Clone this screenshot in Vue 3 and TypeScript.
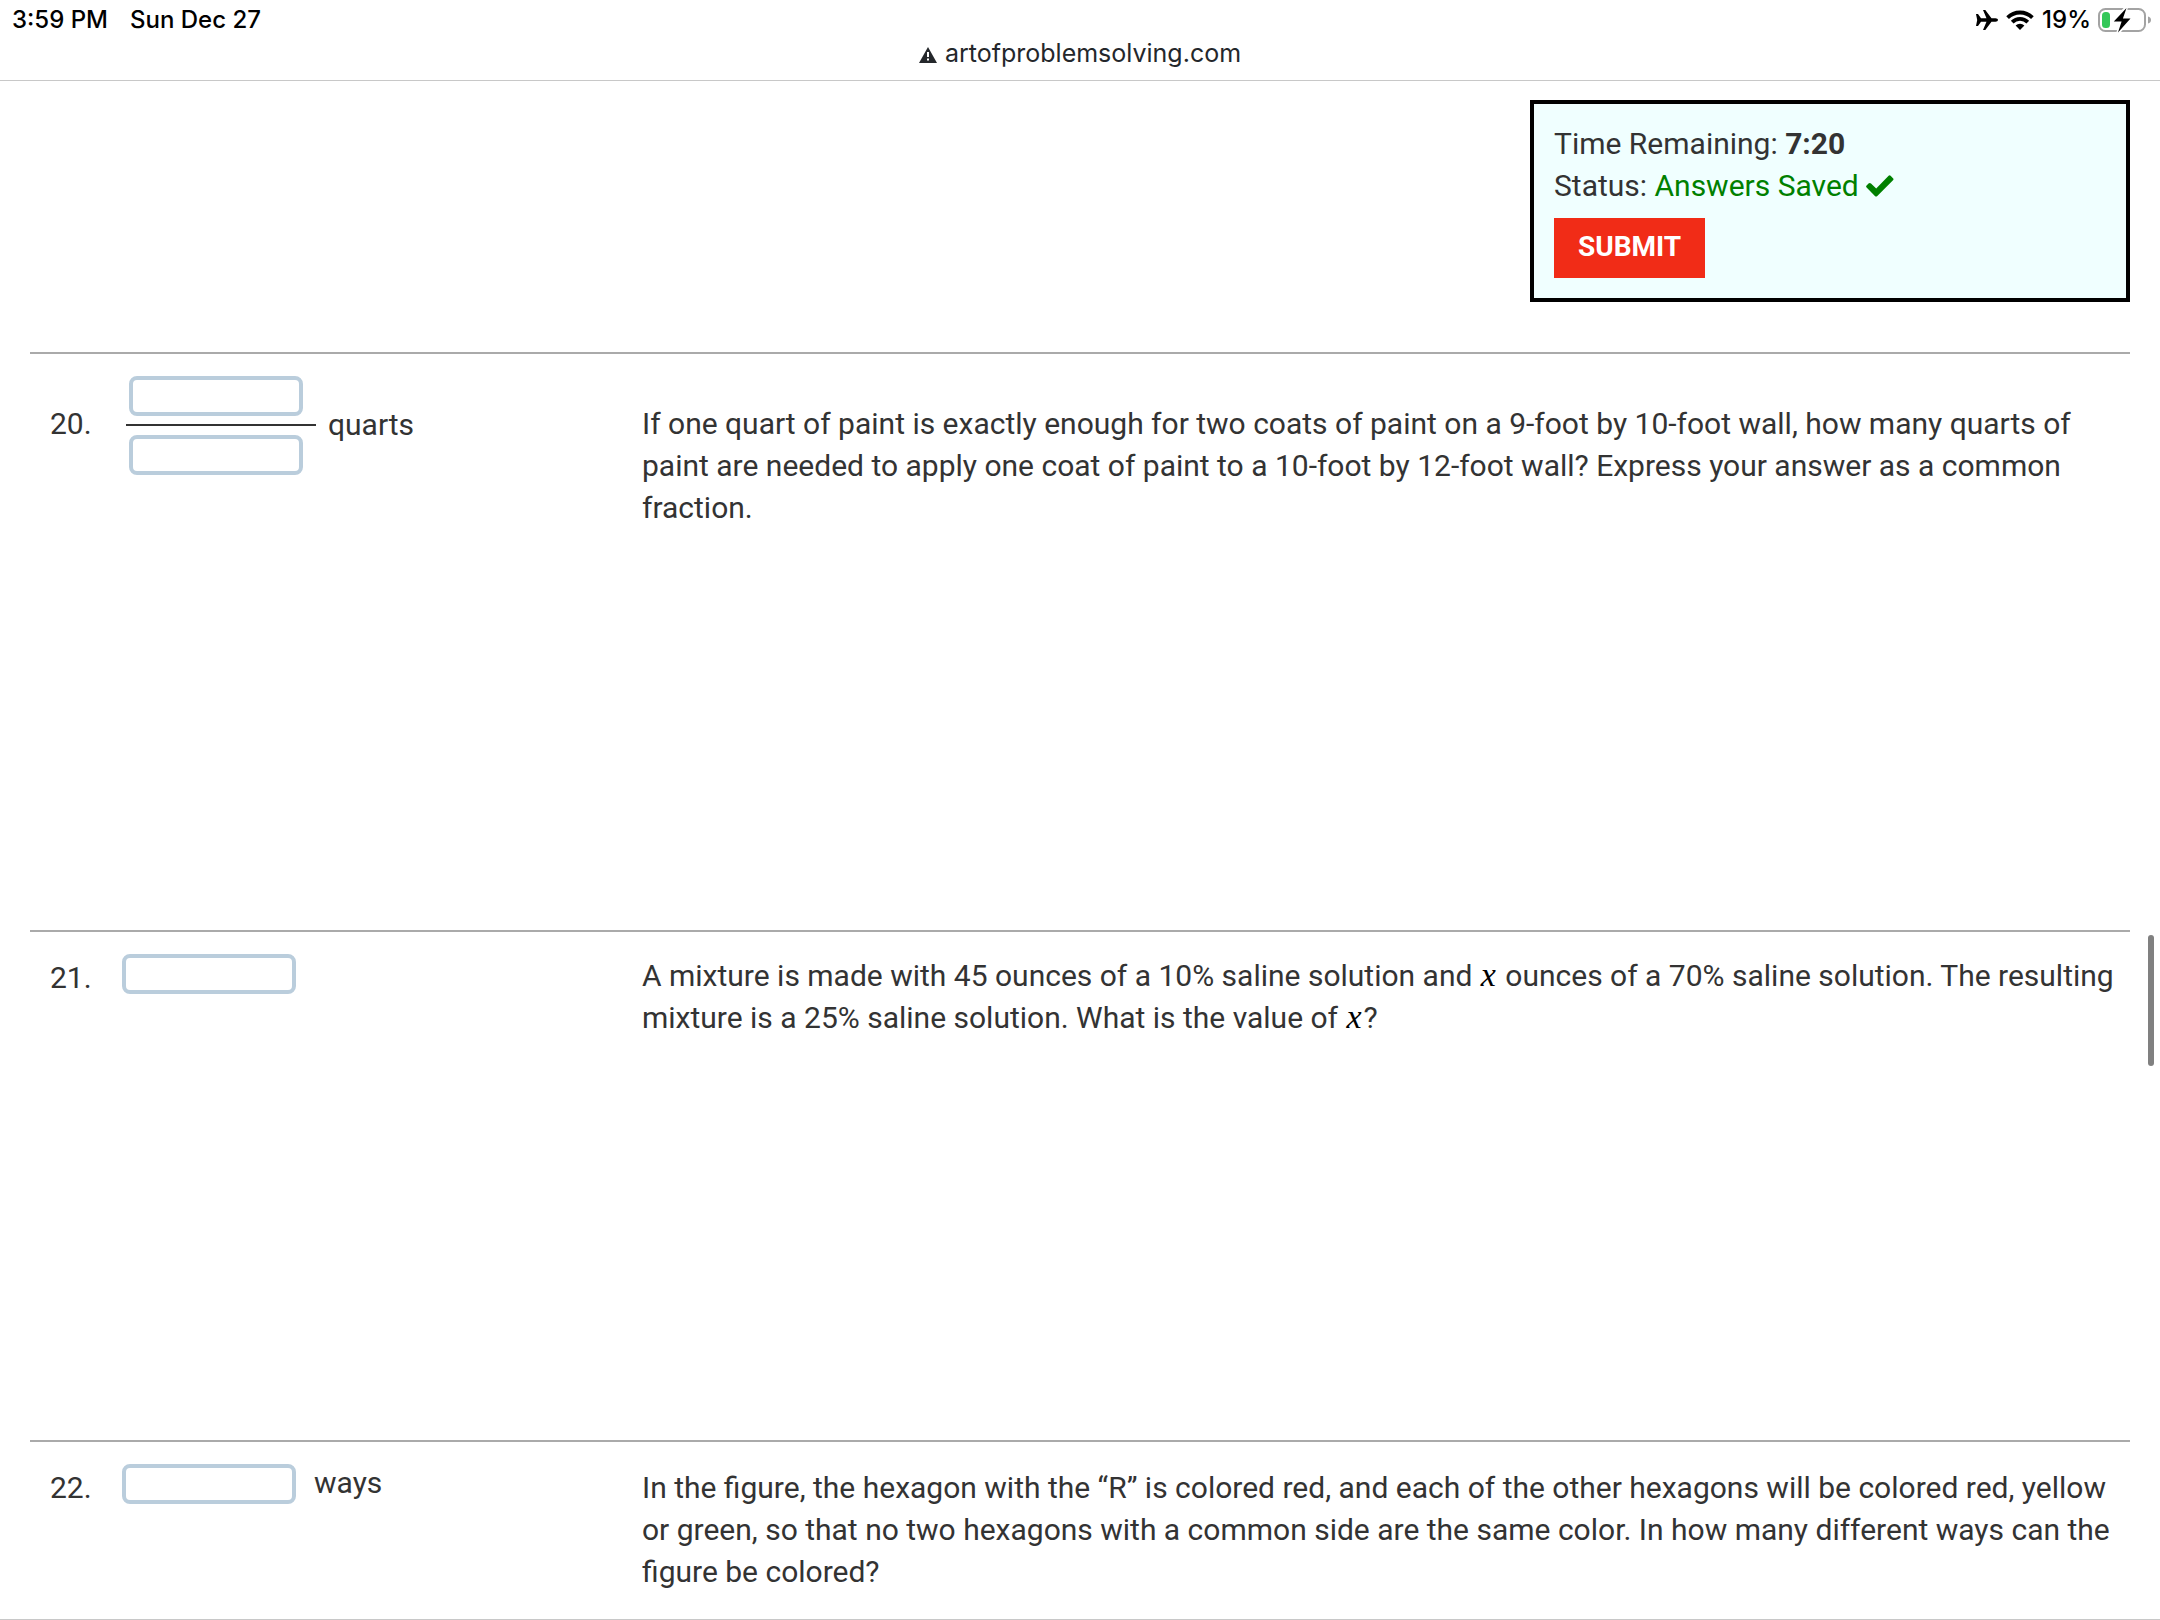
<script setup lang="ts">
import { ref } from 'vue'

interface Problem {
  number: number
  kind: 'single' | 'fraction'
  unit: string
  // pieces of text; entries marked as math are set in the math face
  text: { value: string; math?: boolean }[]
  size: 'tall' | 'medium' | 'rest'
}

const problems: Problem[] = [
  {
    number: 20,
    kind: 'fraction',
    unit: 'quarts',
    size: 'tall',
    text: [
      {
        value:
          'If one quart of paint is exactly enough for two coats of paint on a 9-foot by 10-foot wall, how many quarts of paint are needed to apply one coat of paint to a 10-foot by 12-foot wall? Express your answer as a common fraction.',
      },
    ],
  },
  {
    number: 21,
    kind: 'single',
    unit: '',
    size: 'medium',
    text: [
      { value: 'A mixture is made with 45 ounces of a 10% saline solution and ' },
      { value: 'x', math: true },
      {
        value:
          ' ounces of a 70% saline solution. The resulting mixture is a 25% saline solution. What is the value of ',
      },
      { value: 'x', math: true },
      { value: '?' },
    ],
  },
  {
    number: 22,
    kind: 'single',
    unit: 'ways',
    size: 'rest',
    text: [
      {
        value:
          'In the figure, the hexagon with the “R” is colored red, and each of the other hexagons will be colored red, yellow or green, so that no two hexagons with a common side are the same color. In how many different ways can the figure be colored?',
      },
    ],
  },
]

const answers = ref<Record<string, string>>({})
</script>

<template>
  <div class="page">
    <header class="browser">
      <div class="status">
        <span>3:59 PM</span>
        <span class="date">Sun Dec 27</span>
        <div class="indicators">
          <svg viewBox="0 0 22 20" width="22" height="20" aria-hidden="true">
            <path
              d="M0 4h2l3 4.300h5.500L7 0h2.300l6.200 8.300h4c1.400 0 2.500.9 2.500 1.700s-1.100 1.700-2.500 1.700h-4L9.300 20H7l3.500-8.300H5L2 16H0l1.200-6z"
            />
          </svg>
          <svg class="wifi" viewBox="0 0 28 20" width="28" height="20" aria-hidden="true">
            <path d="M1.600 7.600a17.600 17.600 0 0 1 24.800 0" fill="none" stroke="#000" stroke-width="3.800" />
            <path d="M6.200 12.200a11 11 0 0 1 15.600 0" fill="none" stroke="#000" stroke-width="3.800" />
            <path d="M9.600 15.600a6.200 6.200 0 0 1 8.800 0L14 20z" />
          </svg>
          <span>19%</span>
          <svg class="battery" viewBox="0 0 54 26" width="54" height="26" aria-hidden="true">
            <rect x="1" y="2" width="46" height="22" rx="6.500" fill="none" stroke="#a3a3a3" stroke-width="2" />
            <path d="M50 9.500c2 .5 3 1.900 3 3.500s-1 3-3 3.500z" fill="#a3a3a3" />
            <rect x="4" y="5" width="8" height="16" rx="3.500" fill="#34c759" />
            <path d="M28.500 0 15.200 15h7.800l-3.400 11.500L33 11.200h-7.500z" stroke="#fff" stroke-width="3" />
            <path d="M28.500 1 15.800 14.500h7.800L20 25.500 32.500 11.500h-7.600z" />
          </svg>
        </div>
      </div>
      <div class="address">
        <svg viewBox="0 0 18 16" width="18" height="16" aria-hidden="true">
          <path d="M9 0 18 16H0z" fill="#24272b" />
          <path d="M8 5h2v5H8zM8 11.500h2v2H8z" fill="#fff" />
        </svg>
        <span>artofproblemsolving.com</span>
      </div>
    </header>

    <main>
      <section class="panel">
        <div>Time Remaining: <b>7:20</b></div>
        <div>
          Status:
          <span class="saved"
            >Answers Saved
            <svg viewBox="0 0 28 22" width="28" height="22" aria-hidden="true">
              <path
                d="M2.500 8.600 0.600 10.500q-1 1 0 2l8.300 8.600q1.200 1 2.400 0L27 5.200q1-1 0-2L24.600.8q-1-1-2 0L10.200 13.400 5 8.600q-1.200-1-2.500 0z"
              />
            </svg>
          </span>
        </div>
        <button type="button">SUBMIT</button>
      </section>

      <form @submit.prevent>
        <section v-for="p in problems" :key="p.number" class="problem" :class="[p.kind, p.size]">
          <label class="number" :for="`answer-${p.number}`">{{ p.number }}.</label>
          <div class="answer">
            <div v-if="p.kind === 'fraction'" class="stack">
              <div class="top">
                <input :id="`answer-${p.number}`" v-model="answers[`${p.number}-top`]" type="text" />
              </div>
              <div class="bottom">
                <input v-model="answers[`${p.number}-bottom`]" type="text" aria-label="Denominator" />
              </div>
            </div>
            <input v-else :id="`answer-${p.number}`" v-model="answers[p.number]" class="single-box" type="text" />
            <span v-if="p.unit" class="unit">{{ p.unit }}</span>
          </div>
          <p class="question">
            <template v-for="(t, i) in p.text" :key="i"
              ><i v-if="t.math">{{ t.value }}</i
              ><template v-else>{{ t.value }}</template></template
            >
          </p>
        </section>
      </form>
    </main>
    <div class="scroll-thumb"></div>
  </div>
</template>

<style>
body {
  margin: 0;
  background: #fff;
}
</style>

<style scoped>
.page {
  position: relative;
  box-sizing: border-box;
  min-height: 100vh;
  display: flex;
  flex-direction: column;
  border-bottom: 1px solid #c8c8c8;
  color: #333;
  font: 30px/42px Roboto, sans-serif;
}
.browser {
  border-bottom: 1px solid #c8c8c8;
  font-family: Inter, sans-serif;
}
.status {
  display: flex;
  align-items: center;
  height: 40px;
  padding: 0 8px 0 12px;
  color: #000;
  font-size: 24px;
  font-weight: 500;
}
.date {
  margin-left: 22px;
}
.indicators {
  display: flex;
  align-items: center;
  margin-left: auto;
}
.wifi {
  margin: 0 8px;
}
.battery {
  margin-left: 7px;
}
.address {
  display: flex;
  align-items: center;
  justify-content: center;
  gap: 8px;
  height: 40px;
  color: #24272b;
  font-size: 25px;
  line-height: 26px;
}
.address span {
  padding-bottom: 14px;
}
.address svg {
  margin-bottom: 10px;
}
main {
  flex: 1;
  padding: 19px 30px 0;
}
.panel {
  box-sizing: border-box;
  width: 600px;
  margin: 0 0 50px auto;
  padding: 19px 20px 20px;
  border: 4px solid #000;
  background: #f0ffff;
}
.saved {
  color: #008000;
}
.saved svg {
  fill: #008000;
  vertical-align: -1px;
}
.panel button {
  display: block;
  height: 60px;
  margin-top: 11px;
  padding: 0 24px 2px;
  border: 0;
  background: #f12c17;
  color: #fff;
  font: bold 28px/56px Roboto, sans-serif;
}
.problem {
  box-sizing: border-box;
  display: flex;
  align-items: flex-start;
  padding: 22px 0 0 20px;
  border-top: 2px solid #aaa;
}
.tall {
  min-height: 578px;
}
.medium {
  min-height: 510px;
}
.number {
  width: 72px;
  padding-top: 3px;
}
.answer {
  display: flex;
  align-items: center;
  gap: 12px;
  width: 520px;
}
.question {
  flex: 1;
  margin: 0;
  padding-top: 3px;
}
.medium .question {
  padding-top: 1px;
}
.fraction .number,
.fraction .question {
  padding-top: 27px;
}
.unit {
  padding-bottom: 2px;
  line-height: 38px;
}
input {
  box-sizing: border-box;
  display: block;
  width: 174px;
  height: 40px;
  padding: 0 8px;
  border: 4px solid #bacddc;
  border-radius: 8px;
  background: #fff;
  color: #333;
  font: 26px Roboto, sans-serif;
}
.single-box {
  margin-right: 6px;
}
.stack {
  width: 190px;
  margin-left: 4px;
}
.top {
  padding: 0 3px 8px;
  border-bottom: 2px solid #333;
}
.bottom {
  padding: 9px 3px 0;
}
.question i {
  padding: 0 2px 0 1px;
  color: #000;
  font-family: 'Liberation Serif', serif;
  font-size: 34px;
  line-height: 36px;
}
.scroll-thumb {
  position: absolute;
  top: 935px;
  right: 6px;
  width: 6px;
  height: 131px;
  border-radius: 3px;
  background: #808080;
}
</style>
